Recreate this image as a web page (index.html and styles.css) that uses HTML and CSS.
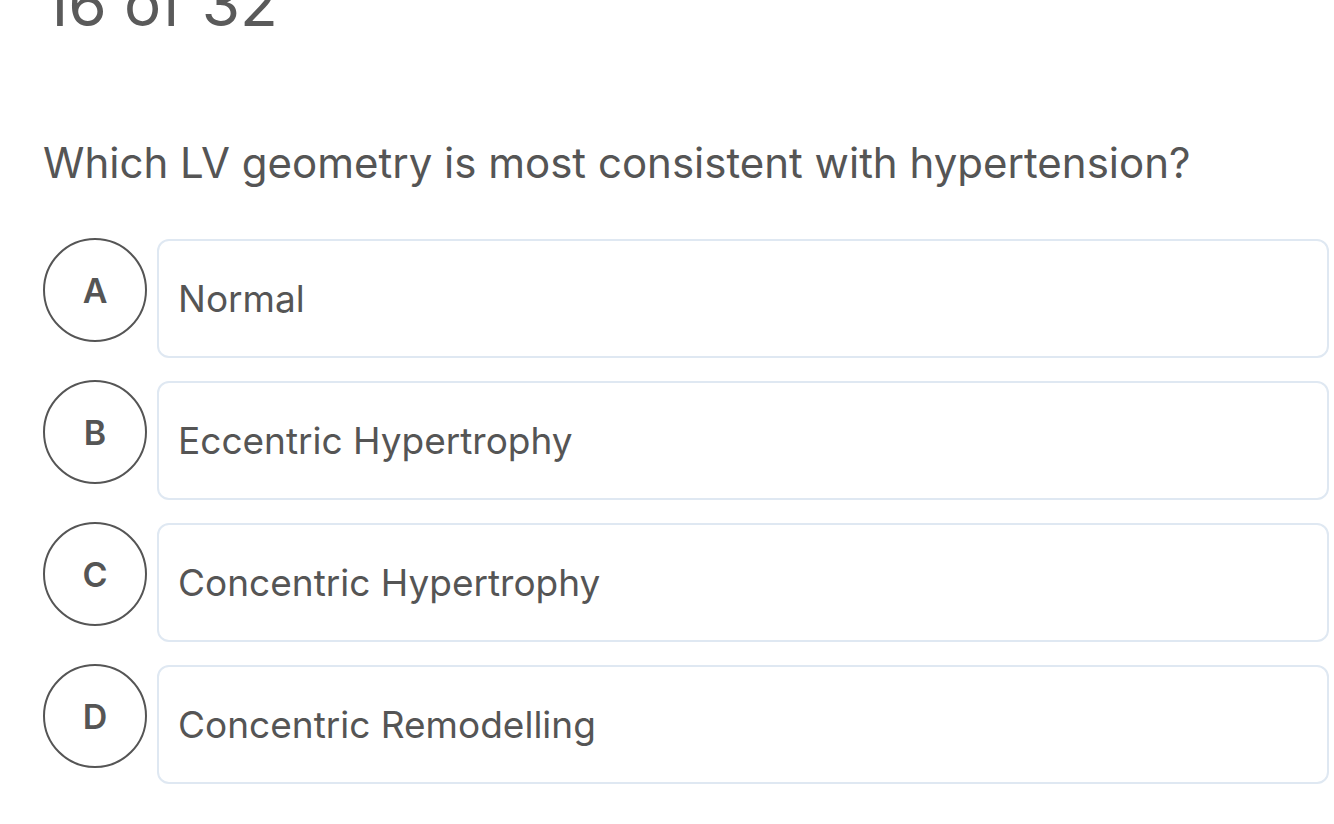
FILE: index.html
```html
<!DOCTYPE html>
<html>
<head>
<meta charset="utf-8">
<link rel="stylesheet" href="styles.css">
</head>
<body>
<div class="page">
  <div class="counter">16 of 32</div>
  <div class="question">Which LV geometry is most consistent with hypertension?</div>
  <div class="options">
    <div class="option"><div class="letter">A</div><div class="box">Normal</div></div>
    <div class="option"><div class="letter">B</div><div class="box">Eccentric Hypertrophy</div></div>
    <div class="option"><div class="letter">C</div><div class="box">Concentric Hypertrophy</div></div>
    <div class="option"><div class="letter">D</div><div class="box">Concentric Remodelling</div></div>
  </div>
</div>
</body>
</html>
```

FILE: styles.css
```css
html, body {
  margin: 0;
  padding: 0;
  background: #ffffff;
}
body {
  font-family: Inter, "Noto Sans", sans-serif;
  color: #555555;
  overflow: hidden;
  height: 824px;
}
.page {
  padding: 0 5px 0 43px;
  margin-top: -32px;
}
.counter {
  font-size: 62px;
  line-height: 72px;
  font-weight: 400;
  color: #5a5a5a;
}
.question {
  margin-top: 97px;
  font-size: 42px;
  line-height: 52px;
  color: #555555;
}
.options {
  margin-top: 50px;
  display: flex;
  flex-direction: column;
  gap: 23px;
}
.option {
  display: flex;
  align-items: flex-start;
  gap: 10px;
}
.letter {
  flex: none;
  width: 100px;
  height: 100px;
  border: 2px solid #555555;
  border-radius: 50%;
  display: flex;
  align-items: center;
  justify-content: center;
  font-size: 34px;
  font-weight: 600;
  color: #555555;
  margin-top: -1px;
}
.box {
  flex: 1;
  height: 115px;
  border: 2px solid #dfe8f2;
  border-radius: 12px;
  display: flex;
  align-items: center;
  padding-left: 19px;
  font-size: 37px;
  color: #555555;
}
```
